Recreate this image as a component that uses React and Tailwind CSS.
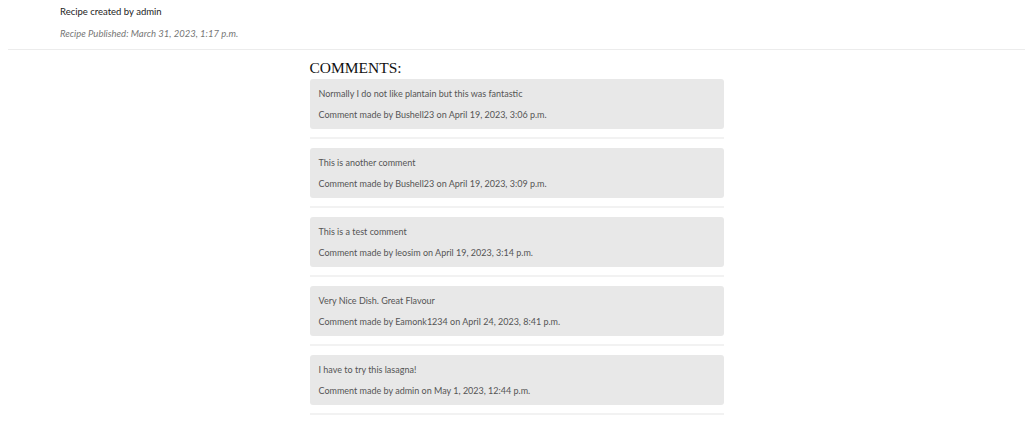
import React from "react";

const comments = [
  { body: "Normally I do not like plantain but this was fantastic", meta: "Comment made by Bushell23 on April 19, 2023, 3:06 p.m." },
  { body: "This is another comment", meta: "Comment made by Bushell23 on April 19, 2023, 3:09 p.m." },
  { body: "This is a test comment", meta: "Comment made by leosim on April 19, 2023, 3:14 p.m." },
  { body: "Very Nice Dish. Great Flavour", meta: "Comment made by Eamonk1234 on April 24, 2023, 8:41 p.m." },
  { body: "I have to try this lasagna!", meta: "Comment made by admin on May 1, 2023, 12:44 p.m." },
];

export default function App() {
  return (
    <div className="min-h-[422px] bg-white" style={{ fontFamily: "Lato, 'Noto Sans', sans-serif" }}>
      <div className="pl-[60px] pt-[6px]">
        <p className="text-[9.5px] leading-[12px] text-[#222]">Recipe created by admin</p>
        <p className="mt-[10px] text-[9.5px] leading-[12px] italic text-[#777]">Recipe Published: March 31, 2023, 1:17 p.m.</p>
      </div>
      <div className="mx-[8px] mt-[9px] h-px bg-[#ececec]" />
      <div className="mx-auto w-[414px] pt-[9px]">
        <h2
          className="text-[15.5px] leading-[17px] text-[#111]"
          style={{ fontFamily: "'Liberation Serif', 'DejaVu Serif', serif" }}
        >
          COMMENTS:
        </h2>
        <div className="mt-[3px] flex flex-col">
          {comments.map((c, i) => (
            <div key={i} className="flex flex-col">
              <div className="flex h-[50px] flex-col justify-center gap-[9px] rounded-[3px] bg-[#e8e8e8] px-[9px] text-[9px] leading-[12px] text-[#555]">
                <p>{c.body}</p>
                <p>{c.meta}</p>
              </div>
              <div className="mt-[8px] mb-[9px] h-[2px] bg-[#f2f2f2]" />
            </div>
          ))}
        </div>
      </div>
    </div>
  );
}
